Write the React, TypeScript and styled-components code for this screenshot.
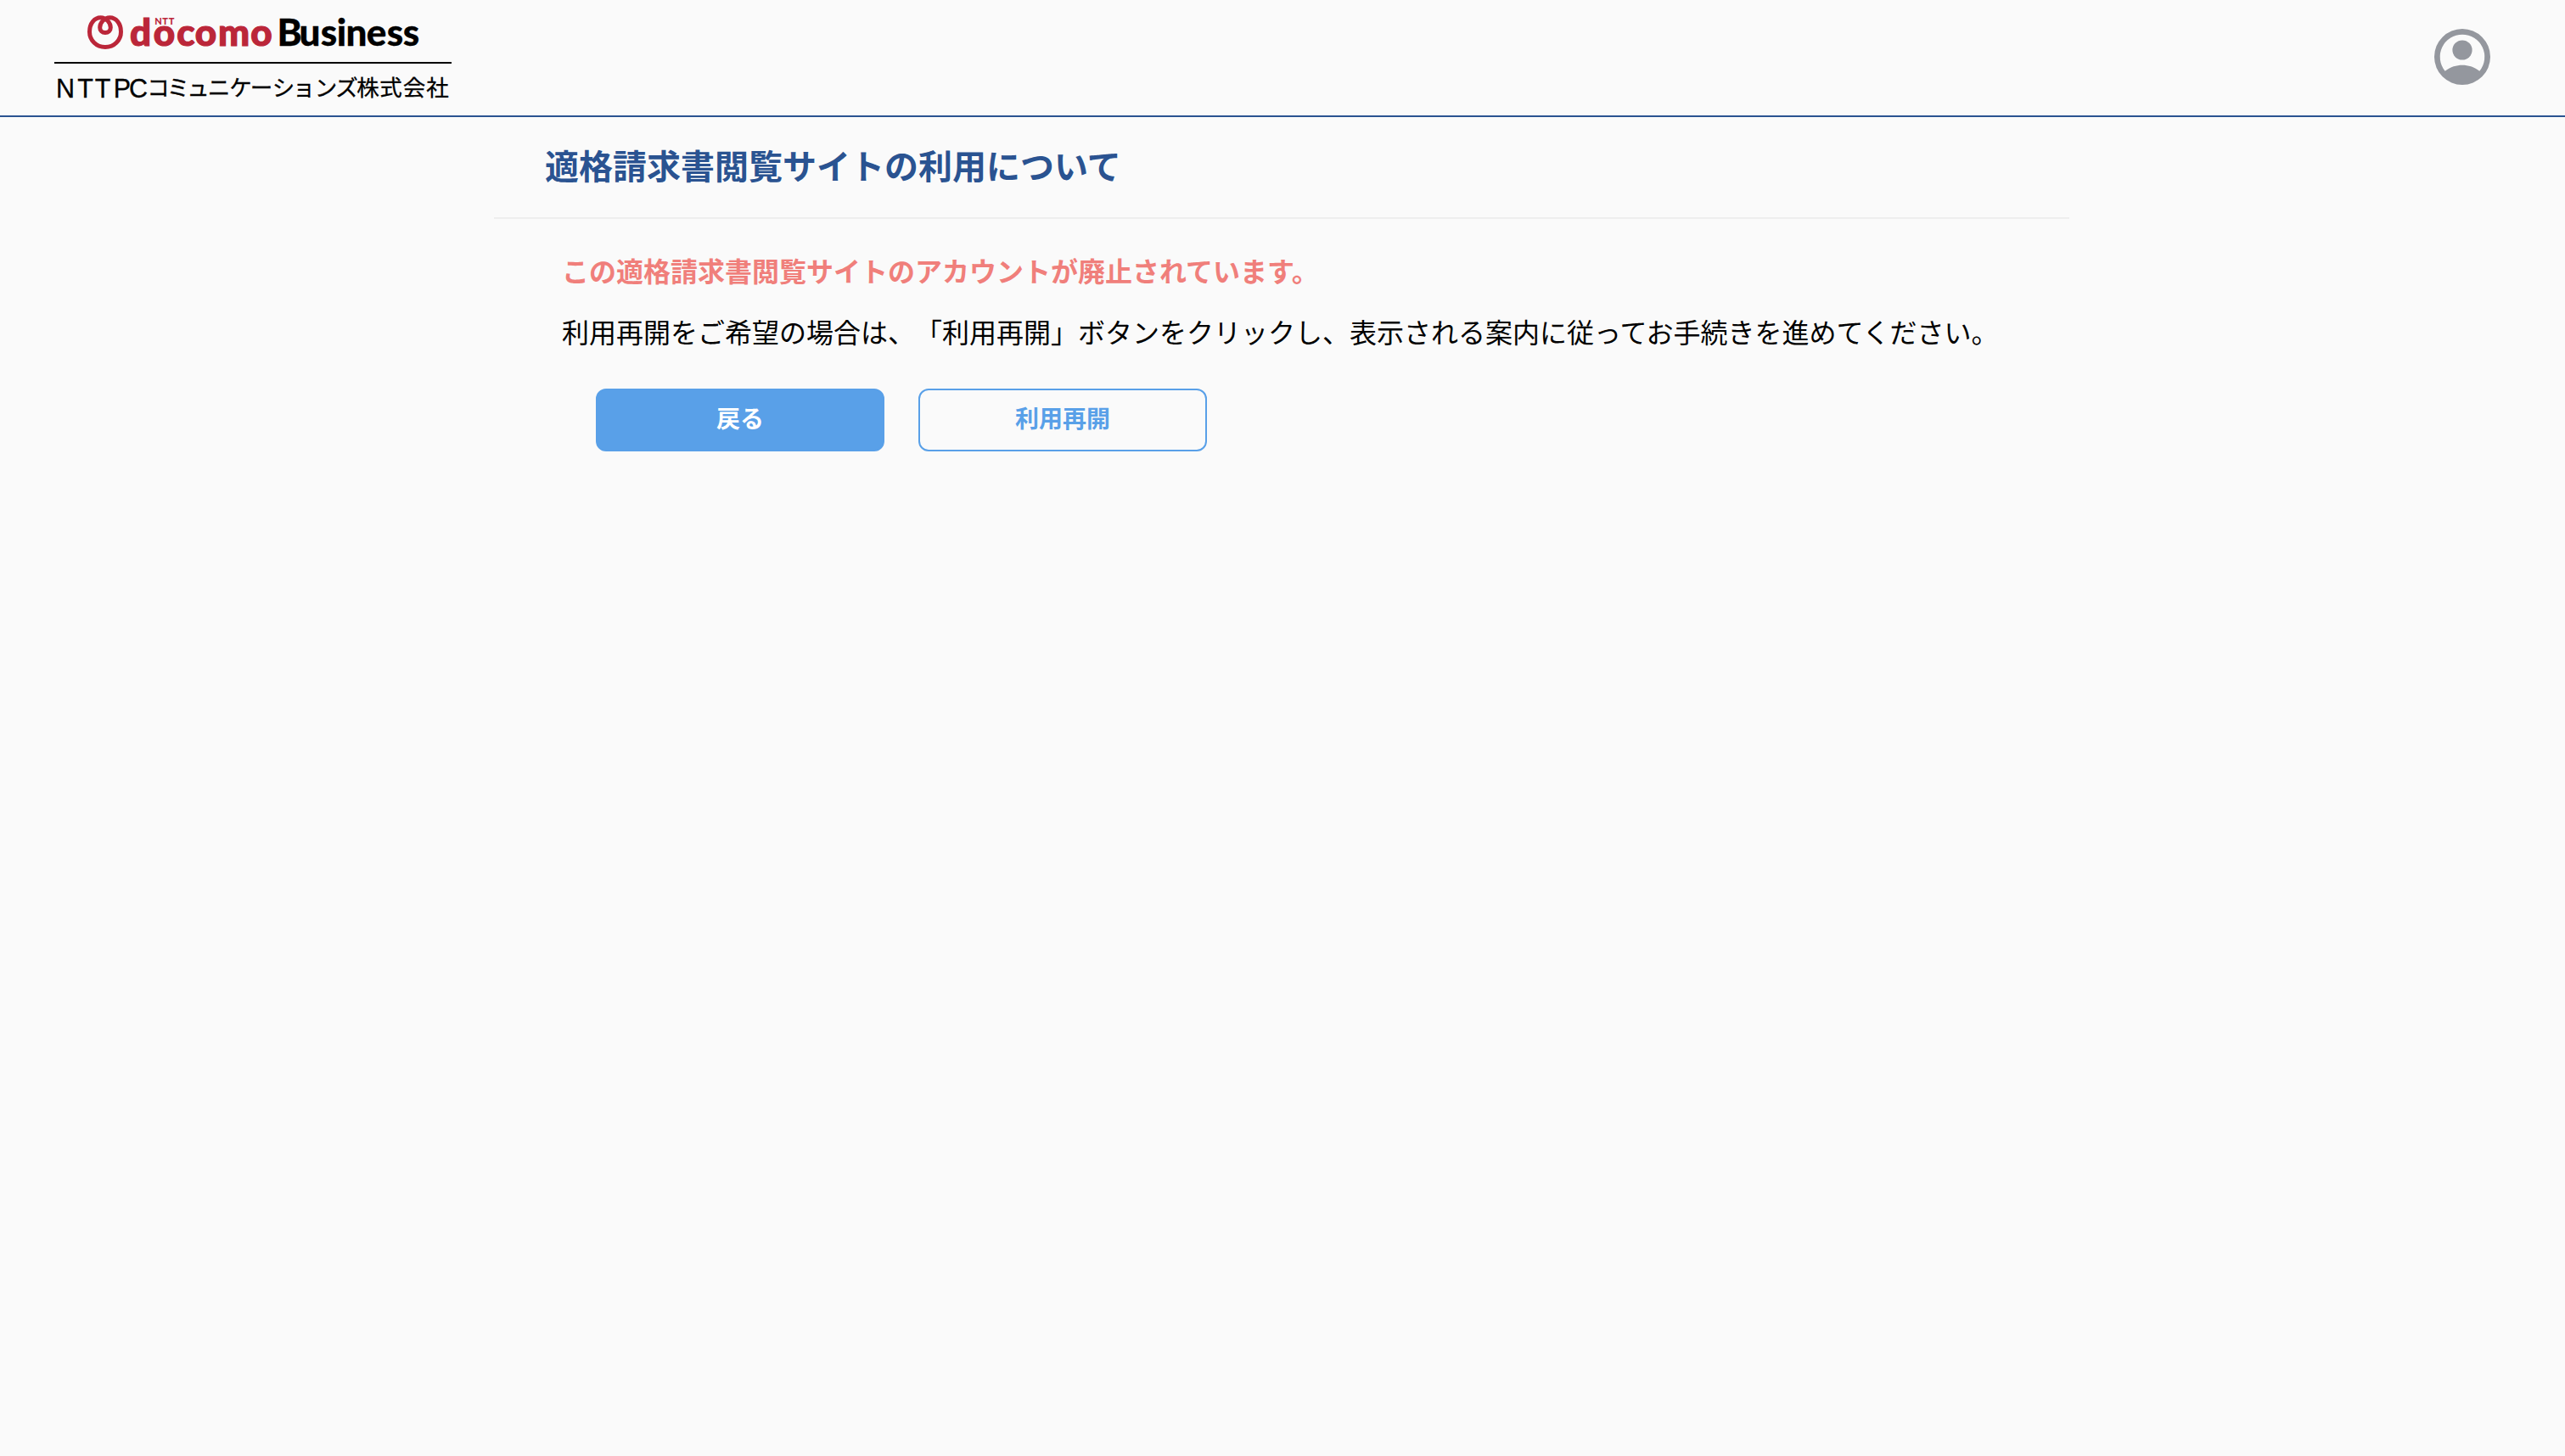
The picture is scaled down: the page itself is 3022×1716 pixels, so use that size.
import styled, {createGlobalStyle, css} from "styled-components";

export default function App() {
    return (
        <>
            <GlobalStyle/>
            <StyledHeader>
                <Logo/>
                <UserIcon/>
            </StyledHeader>
            <StyledMain>
                <StyledTitle>適格請求書閲覧サイトの利用について</StyledTitle>
                <StyledContent>
                    <StyledText alert>この適格請求書閲覧サイトのアカウントが廃止されています。</StyledText>
                    <StyledText>利用再開をご希望の場合は、「利用再開」ボタンをクリックし、表示される案内に従ってお手続きを進めてください。</StyledText>
                    <StyledButtons>
                        <StyledBtn primary>戻る</StyledBtn>
                        <StyledBtn outlined>利用再開</StyledBtn>
                    </StyledButtons>
                </StyledContent>
            </StyledMain>
        </>
    );
}

function Logo() {
    return (
        <StyledLogo viewBox="0 0 468 120">
            <path
                fill="none"
                stroke="#bb2639"
                strokeWidth="5"
                d="M60 47.500C49.500 47.500 41.500 39.500 41.500 29.500C41.500 19.500 47.500 12.800 54.500 12.800C61.500 12.800 66.300 19 66.300 24.500C66.300 28.300 63.500 30.500 60 30.500C56.500 30.500 53.700 28.300 53.700 24.500C53.700 19 58.500 12.800 65.500 12.800C72.500 12.800 78.500 19.500 78.500 29.500C78.500 39.500 70.500 47.500 60 47.500Z"
            />
            <StyledLogoText brand x="101.5 129.5 155 178.5 211.5 244" y="45.500">docomo</StyledLogoText>
            <StyledLogoText x="277 301 323.5 338.5 356 379.5 401.5 420.5" y="45.500">Business</StyledLogoText>
            <StyledNtt x="122.5 130.5 138" y="20.500">NTT</StyledNtt>
            <rect x="0" y="65" width="468" height="2"/>
            <StyledCompany latin x="13 36.5 57 80 99" y="107">NTTPC</StyledCompany>
            <StyledCompany x="122.5 146 169.5 194 219.5 244 270 294 320 344.5 369.5 396.5 424 451.5" y="104.500">
                コミュニケーションズ株式会社
            </StyledCompany>
        </StyledLogo>
    );
}

function UserIcon() {
    return (
        <StyledUserIcon viewBox="0 0 66 66">
            <path
                fillRule="evenodd"
                d="M33 0a33 33 0 1 0 0 66a33 33 0 0 0 0-66zM33 6.700a26.300 26.300 0 0 1 20.300 43C46.500 44.800 40 42.800 33 42.800S19.500 44.800 12.700 49.700A26.300 26.300 0 0 1 33 6.700z"
            />
            <circle cx="33" cy="25" r="11.6"/>
        </StyledUserIcon>
    );
}


const GlobalStyle = createGlobalStyle`
  body {
    margin: 0;
    background-color: #fafafa;
    color: #000000;
    font-family: "Noto Sans CJK JP", sans-serif;
    text-spacing-trim: space-all;
  }
`
const StyledHeader = styled.header`
  display: flex;
  justify-content: space-between;
  align-items: flex-start;
  box-sizing: border-box;
  height: 138px;
  padding: 8px 88px 0 64px;
  border-bottom: 2px solid #2a5391;
`
const StyledLogo = styled.svg`
  width: 468px;
  height: 120px;
  overflow: visible;
`
type StyledLogoTextPropsType = {
    brand?: boolean
}
const StyledLogoText = styled.text<StyledLogoTextPropsType>`
  font-family: Lato, sans-serif;
  font-size: 44px;
  font-weight: 900;
  text-anchor: middle;
  fill: ${props => props.brand ? "#bb2639" : "#000000"};
  stroke: ${props => props.brand ? "#bb2639" : "#000000"};
  stroke-width: ${props => props.brand ? "1.2px" : "0.3px"};
`
const StyledNtt = styled.text`
  font-family: Lato, sans-serif;
  font-size: 11px;
  font-weight: 900;
  text-anchor: middle;
  fill: #bb2639;
`
type StyledCompanyPropsType = {
    latin?: boolean
}
const StyledCompany = styled.text<StyledCompanyPropsType>`
  font-family: "Noto Sans CJK JP", sans-serif;
  font-size: 26.5px;
  text-anchor: middle;
  stroke: #000000;
  stroke-width: 0.3px;
  ${props => props.latin && css<StyledCompanyPropsType>`
    font-family: "Liberation Sans", sans-serif;
    font-size: 30.5px;
  `}
`
const StyledUserIcon = styled.svg`
  width: 66px;
  height: 66px;
  margin-top: 26px;
  fill: #94979e;
`
const StyledMain = styled.main`
  width: 1856px;
  margin-left: 582px;
`
const StyledTitle = styled.h1`
  box-sizing: border-box;
  height: 120px;
  margin: 0;
  padding: 26px 60px 0;
  border-bottom: 2px solid #eeeeee;
  font-size: 40px;
  font-weight: 700;
  line-height: 60px;
  color: #2a5391;
`
const StyledContent = styled.section`
  padding: 36px 0 0 80px;
`
type StyledTextPropsType = {
    alert?: boolean
}
const StyledText = styled.p<StyledTextPropsType>`
  margin: 0 0 24px;
  font-size: 32px;
  line-height: 48px;
  white-space: nowrap;
  ${props => props.alert && css<StyledTextPropsType>`
    color: #f07f7b;
    font-weight: 700;
  `}
`
const StyledButtons = styled.div`
  display: flex;
  gap: 40px;
  margin-top: 44px;
  padding-left: 40px;
`
type StyledBtnPropsType = {
    primary?: boolean
    outlined?: boolean
}
const StyledBtn = styled.button<StyledBtnPropsType>`
  width: 340px;
  height: 74px;
  padding: 0 0 6px;
  font-family: inherit;
  font-weight: 700;
  font-size: 28px;
  border-radius: 12px;
  border: 2px solid #59a0e8;
  ${props => props.primary && css<StyledBtnPropsType>`
    background-color: #59a0e8;
    color: #ffffff;
  `}
  ${props => props.outlined && css<StyledBtnPropsType>`
    background-color: #fafafa;
    color: #59a0e8;
  `}
`
